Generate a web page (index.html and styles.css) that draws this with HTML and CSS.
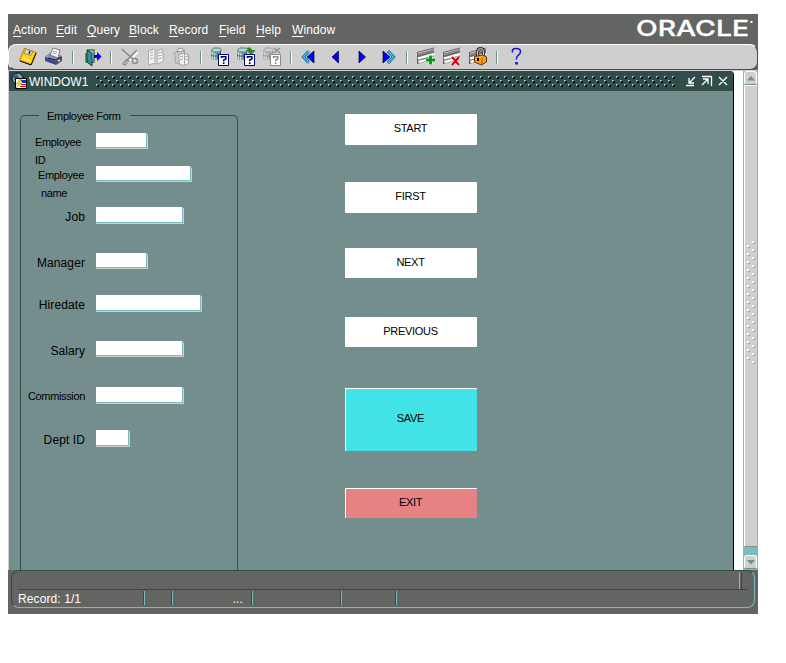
FILE: index.html
```
<!DOCTYPE html>
<html lang="en">
<head>
<meta charset="utf-8">
<title>WINDOW1</title>
<link rel="stylesheet" href="styles.css">
</head>
<body>
<div class="app">
  <header class="menubar">
    <nav class="menus"><span><u>A</u>ction</span><span><u>E</u>dit</span><span><u>Q</u>uery</span><span><u>B</u>lock</span><span><u>R</u>ecord</span><span><u>F</u>ield</span><span><u>H</u>elp</span><span><u>W</u>indow</span></nav>
    <svg class="brand" width="122" height="28"><text x="0" y="20" textLength="113" lengthAdjust="spacingAndGlyphs">ORACLE</text><path d="M115.500 5v2" stroke="#fff" stroke-width="2"/></svg>
  </header>
  <svg width="0" height="0" class="defs">
    <defs>
      <g id="cyl"><path d="M1 3v8l2 2h8V3" fill="#73aaa5"/><path d="M2.500 4v8M4.500 6v7" stroke="#c8e0dc"/><path d="M1.500 3l2-2h6l2 2-2 2h-6z" fill="#b5d6d2" stroke="#527d7b"/><path d="M8 6v6M10.500 4v5" stroke="#315552"/><path d="M1 8l2 1h8" stroke="#426d6b" fill="none"/></g>
      <g id="ask"><path d="M8.500 7.500h10v11h-10z" fill="#fff" stroke="currentColor"/><path d="M11.500 11v-1.300h4.300v2.400l-2.100 1v1.200M13.700 15.300v1.700" stroke="currentColor" stroke-width="1.600" fill="none"/></g>
      <g id="rows"><path d="M1 7L18 2v4L1 11z" fill="#848684"/><path d="M1 5.500L18 1M1 9.500L18 5M1 13.500L18 9M1 16.500L18 12" stroke="#666"/><path d="M2 11.500L18 7M3 15L18 11" stroke="#fff" stroke-width="2"/><path d="M1.500 5v12" stroke="#555" stroke-dasharray="2 1"/></g>
    </defs>
  </svg>
  <div class="toolbar">
    <span class="tool"><svg viewBox="0 0 20 20"><path d="M6.500 1.500l12 4-5 12-12-4z" fill="#ffcf10" stroke="#b58200"/><path d="M2 14l11 4 5-12" fill="none" stroke="#000"/><path d="M8 2l7 2.500-2 4-7-2z" fill="#ded7bd" stroke="#777" stroke-width=".7"/><path d="M12 4l-1 3" stroke="#222" stroke-width="1.500"/><path d="M5 11l7 3" stroke="#ffef7b" stroke-width="2"/></svg></span>
    <span class="tool"><svg viewBox="0 0 20 20"><path d="M1 10l5-4 12 3v5l-6 4-11-4z" fill="#42498c"/><path d="M1 10l5-4 12 3-6 5z" fill="#8c92c6"/><path d="M6 8l3-7 7 2-2 8z" fill="#fff" stroke="#555" stroke-width=".8"/><path d="M9 4l4 1M8.500 6l4 1" stroke="#73aaa5"/><path d="M4 11l8 2 5-3" stroke="#101842" fill="none"/><path d="M14 14l2-1" stroke="#ff0" stroke-width="1.500"/></svg></span>
    <i class="sep"></i>
    <span class="tool"><svg viewBox="0 0 20 20"><path d="M2 2h14v15H2z" fill="#d8d5b6"/><path d="M4 6v9h3M10 15h2V3H5" fill="none" stroke="#426d6b" stroke-width="1.500"/><path d="M5 3l5 3v13l-5-4z" fill="#299292" stroke="#004142"/><path d="M12 8h3V5l4.500 4.500L15 14v-3h-3z" fill="#0000f7"/></svg></span>
    <i class="sep"></i>
    <span class="tool"><svg viewBox="0 0 20 20"><path d="M3 2l11 11M17 4L5 16" stroke="#fff" stroke-width="2" transform="translate(1 1)"/><path d="M2 2l11 10M17 3L5 15" stroke="#8c8e8c" stroke-width="1.700"/><circle cx="15" cy="14" r="2.500" fill="none" stroke="#8c8e8c" stroke-width="1.500"/><path d="M3 17l3-4 3 1-4 4z" fill="none" stroke="#8c8e8c" stroke-width="1.300"/></svg></span>
    <span class="tool"><svg viewBox="0 0 20 20"><path d="M2.500 4l5-1.500 4 1 5-1.500 1 12-6 3-3-1-6 2z" fill="#f3f3f3" stroke="#aaa"/><path d="M9 4v11M11 4v13" stroke="#999"/><path d="M4 6l3-1M4 9l3-1M4 12l3-1M12 6l4-1M12 9l4-1M12 12l4-1" stroke="#aaa"/></svg></span>
    <span class="tool"><svg viewBox="0 0 20 20"><path d="M2.500 5.500l10-2.500v14l-9-1z" fill="#ccc" stroke="#a2a2a2"/><path d="M5 5l1-3 4-1 2 3z" fill="#eee" stroke="#929292"/><path d="M6.500 7.500l5-1 5 1v9l-4 2-5-1z" fill="#f3f3f3" stroke="#a2a2a2"/><path d="M8 10l3-1M8 13l3-1M13 10l3-1M13 13l3-1M12.500 7v11" stroke="#aaa"/></svg></span>
    <i class="sep"></i>
    <span class="tool navy"><svg viewBox="0 0 20 20"><use href="#cyl"/><use href="#ask"/></svg></span>
    <span class="tool navy"><svg viewBox="0 0 20 20"><use href="#cyl"/><use href="#ask"/><path d="M11 1q4-1 5 2.500h3l-4 4-4-4h2q0-1-2-2.500z" fill="#219a10" stroke="#105500" stroke-width=".5"/></svg></span>
    <span class="tool faded"><svg viewBox="0 0 20 20"><use href="#cyl" class="gray"/><use href="#ask"/><path d="M12 1l6 5M18 1l-6 5" stroke="#8c8e8c" stroke-width="1.500"/></svg></span>
    <i class="sep"></i>
    <span class="tool"><svg viewBox="0 0 20 20"><path d="M8.500 4.500L3.500 10l5 5.500" fill="none" stroke="#004263" stroke-width="3"/><path d="M9 4L3.500 10 9 16" fill="none" stroke="#39b2ef" stroke-width="2"/><path d="M14 4v12L7 10z" fill="#0000f7" stroke="#000042" stroke-width=".7"/></svg></span>
    <span class="tool"><svg viewBox="0 0 20 20"><path d="M12.500 4v12L6 10z" fill="#0000f7" stroke="#000042" stroke-width=".7"/></svg></span>
    <span class="tool"><svg viewBox="0 0 20 20"><path d="M7 4v12l6.500-6z" fill="#0000f7" stroke="#000042" stroke-width=".7"/></svg></span>
    <span class="tool"><svg viewBox="0 0 20 20"><path d="M10 4l5.500 6-5.500 6" fill="none" stroke="#004263" stroke-width="3"/><path d="M10 4l5.500 6-5.500 6" fill="none" stroke="#39b2ef" stroke-width="2"/><path d="M5 4v12l7-6z" fill="#0000f7" stroke="#000042" stroke-width=".7"/></svg></span>
    <i class="sep"></i>
    <span class="tool"><svg viewBox="0 0 20 20"><use href="#rows"/><path d="M14.500 8v10M10 13h9" stroke="#fff" stroke-width="4"/><path d="M14.500 8.500v9M10 13h9" stroke="#009a10" stroke-width="2.800"/></svg></span>
    <span class="tool"><svg viewBox="0 0 20 20"><use href="#rows"/><path d="M10 10l7 8M17 10l-7 8" stroke="#fff" stroke-width="3.500"/><path d="M10 10l7 8M17 10l-7 8" stroke="#d60008" stroke-width="2.200"/></svg></span>
    <span class="tool"><svg viewBox="0 0 20 20"><use href="#rows"/><path d="M9.500 9V5q0-3.500 3-3.500t3 3.500v4" fill="none" stroke="#333" stroke-width="3"/><path d="M9.500 9V5q0-3.500 3-3.500t3 3.500v4" fill="none" stroke="#ddd"/><path d="M6.500 9.500l8-1.500 4 2v5l-5 3-7-3z" fill="#f79e21" stroke="#633000"/><path d="M14 11v6" stroke="#a55500"/><path d="M10 11v3" stroke="#000" stroke-width="2"/></svg></span>
    <i class="sep"></i>
    <span class="tool"><svg viewBox="0 0 20 20"><path d="M6.500 5.500q-1-4 3.500-4t4.500 3q0 2.500-2.500 4-2 1.500-1.500 4" fill="none" stroke="#1810ce" stroke-width="1.500"/><path d="M10.500 15v2.500" stroke="#1810ce" stroke-width="2.600"/></svg></span>
  </div>
  <main class="desktop">
    <section class="window">
      <div class="titlebar">
        <svg class="appicon" width="16" height="18"><circle cx="6.500" cy="6.500" r="5.500" fill="#8c9adb" stroke="#000"/><path d="M2 4l4-2 2 4-4 3z" fill="#29696b"/><path d="M4.500 6.500h11v10h-11z" fill="#fff" stroke="#000"/><path d="M9 7l-4 5h3l-3 4 6-5H8l3-4z" fill="#ffdf00" stroke="#a58200" stroke-width=".4"/><path d="M10 8h5v3h-4z" fill="#0030d6"/><path d="M10 12.500h5M9 14.500h6" stroke="#e70000"/></svg>
        <span>WINDOW1</span>
        <svg class="grip" width="580" height="11"><defs><pattern id="dots" width="8" height="8" patternUnits="userSpaceOnUse"><path d="M1 1h2v2H1zM5 5h2v2H5z" fill="#000"/><path d="M0 0h2v1H1v1H0zM4 4h2v1H5v1H4z" fill="#84c7c6"/></pattern></defs><rect width="580" height="11" fill="url(#dots)"/></svg>
        <svg class="controls" width="46" height="12" fill="none" stroke="#fff" stroke-width="1.300"><path d="M1 10.500h8M10 2L4 8M4 3v5h5M17 1.500h9.500V11M17 10l6-6M18 4h5v5M34 2l8 8M42 2l-8 8"/></svg>
      </div>
      <div class="content">
        <fieldset class="form">
          <legend>Employee Form</legend>
          <label class="small id">Employee<br>ID</label><input class="w53 h16">
          <label class="small name">Employee<br><em>name</em></label><input class="w97 h16">
          <label>Job</label><input class="w89 h17">
          <label>Manager</label><input class="w53 h16">
          <label>Hiredate</label><input class="w107 h17">
          <label>Salary</label><input class="w89 h16">
          <label class="small">Commission</label><input class="w89 h17">
          <label>Dept ID</label><input class="w35 h17">
        </fieldset>
        <div class="actions">
          <button>START</button>
          <button>FIRST</button>
          <button>NEXT</button>
          <button>PREVIOUS</button>
          <button class="save">SAVE</button>
          <button class="exit">EXIT</button>
        </div>
      </div>
    </section>
    <div class="scrollbar">
      <div class="arrow"><svg width="8" height="5"><path d="M0 4.500L4 0l4 4.500z" fill="#738e8c"/></svg></div>
      <div class="thumb"><svg width="9" height="124"><defs><pattern id="knobs" width="9" height="8" patternUnits="userSpaceOnUse"><path d="M6 2h2v2H6zM1 6h2v2H1z" fill="#84b6ba"/><path d="M5 1h2v2H5zM0 5h2v2H0z" fill="#fff"/></pattern></defs><rect width="9" height="124" fill="url(#knobs)"/></svg></div>
      <div class="arrow"><svg width="8" height="5"><path d="M0 0h8L4 4.500z" fill="#738e8c"/></svg></div>
    </div>
  </main>
  <footer class="status">
    <div class="panel">
      <div class="message"><i></i></div>
      <div class="cells"><span>Record: 1/1</span><span></span><span class="dots">...</span><span></span><span></span></div>
    </div>
  </footer>
</div>
</body>
</html>
```
FILE: styles.css
```
* { box-sizing: border-box; }
body { margin: 0; background: #fff; font: 12px/18px "Liberation Sans", Arial, sans-serif; color: #000; }
.app { width: 750px; height: 600px; margin: 14px 0 0 8px; background: #636562; display: flex; flex-direction: column; }
.defs { position: absolute; }
.menubar { height: 30px; flex: none; display: flex; justify-content: space-between; padding: 2px 0 0 5px; color: #fff; }
.menus { display: grid; grid-template-columns: 43px 31px 42px 40px 50px 37px 36px 45px; line-height: 28px; letter-spacing: .1px; }
.menus u { text-underline-offset: 2px; }
.brand { overflow: visible; }
.brand text { font: 500 21px Inter, sans-serif; fill: #fff; stroke: #fff; stroke-width: .3px; }
.toolbar { height: 26px; flex: none; display: flex; align-items: center; padding-left: 6px; background: #cecfce; border: 1px solid #fff; border-right-color: #315552; border-bottom-color: #315552; border-radius: 8px; }
.tool { width: 26px; height: 20px; display: flex; justify-content: center; flex: none; }
.tool svg { width: 20px; height: 20px; }
.navy { color: #00007b; }
.faded { color: #8c8e8c; }
.gray { filter: grayscale(1); opacity: .5; }
.sep { width: 2px; height: 13px; margin: 0 5px; border-left: 1px solid #738e8c; border-right: 1px solid #fff; flex: none; }
.desktop { height: 500px; flex: none; display: flex; background: #fff; border-top: 1px solid #cecfce; }
.window { width: 726px; border-left: 1px solid #cecfce; border-right: 1px solid #000; background: #738e8c; display: flex; flex-direction: column; border-top-right-radius: 4px; overflow: hidden; }
.titlebar { height: 20px; flex: none; display: flex; align-items: center; padding-left: 2px; background: #314d4a; color: #fff; }
.titlebar span { width: 67px; padding: 1px 0 0 2px; }
.grip { margin-left: 2px; }
.controls { margin-left: 9px; }
.content { display: flex; flex: 1; min-height: 0; }
.form { width: 218px; height: 464px; margin: 15px 0 0 11px; padding: 9px 0 0 5px; border: 1px solid #314d4a; border-bottom: 0; border-radius: 5px 5px 0 0; display: grid; grid-template-columns: 59px 1fr; grid-template-rows: 33px 41px 46px 42px 46px 46px 43px 30px; column-gap: 10px; }
.form legend { width: 91px; margin-left: 13px; padding: 2px 0 0 8px; font-size: 11px; line-height: 16px; letter-spacing: -.3px; }
.form label { text-align: right; margin-top: 1px; letter-spacing: .1px; white-space: nowrap; }
.form .small { font-size: 11px; margin-top: 0; letter-spacing: -.35px; }
.form .id { text-align: left; padding-left: 9px; }
.form .name { text-align: left; padding-left: 12px; }
.form em { font-style: normal; padding-left: 3px; }
.form input { display: block; margin: 0; padding: 0; background: #fff; border: 1px solid #7bbabd; border-width: 0 1px 1px; border-left-color: #738e8c; border-radius: 1px; box-shadow: 1px 1px 0 #cecfce; outline: 0; }
.h16 { height: 15px; }
.h17 { height: 16px; }
.w35 { width: 34px; }
.w53 { width: 52px; }
.w89 { width: 88px; }
.w97 { width: 96px; }
.w107 { width: 106px; }
.actions { width: 132px; margin: 23px 0 0 107px; display: flex; flex-direction: column; }
.actions button { height: 31px; flex: none; margin: 0 0 37px; border: 1px solid #fff; border-right: 0; border-bottom: 0; border-radius: 1px; background: #fff; padding: 0 2px 4px 0; font: 11px "Liberation Sans", Arial, sans-serif; letter-spacing: -.3px; color: #000; }
.actions button:nth-child(2) { margin-bottom: 35px; }
.actions button:nth-child(3) { height: 30px; margin-bottom: 39px; }
.actions button:nth-child(4) { height: 30px; margin-bottom: 41px; }
.actions .save { height: 63px; background: #42e3e7; padding-bottom: 5px; }
.actions .exit { height: 30px; background: #e78284; }
.scrollbar { width: 15px; margin-left: 9px; background: #7bbabd; padding: 0 1px; display: flex; flex-direction: column; }
.arrow { height: 14px; display: flex; align-items: center; justify-content: center; background: #cecfce; border: 1px solid #fff; border-bottom-color: #738e8c; border-radius: 3px; }
.thumb { height: 462px; margin-bottom: 8px; background: #cecfce; border: 1px solid #fff; border-right: 0; border-bottom-color: #738e8c; display: flex; justify-content: center; align-items: flex-start; padding-top: 154px; }
.status { flex: 1; padding: 0 3px 6px; }
.panel { height: 38px; border: 1px solid #314d4a; border-right-color: #7bbabd; border-bottom-color: #7bbabd; border-radius: 8px; }
.message { height: 19px; margin: 0 6px; border-bottom: 1px solid #314d4a; display: flex; justify-content: flex-end; }
.message i { width: 3px; height: 17px; margin: 1px 6px 0 0; border-left: 1px solid #7bbabd; border-right: 1px solid #314d4a; }
.cells { display: grid; grid-template-columns: 127px 28px 80px 89px 55px; padding: 1px 0 0 6px; color: #fff; line-height: 16px; }
.cells span { height: 14px; border-right: 1px solid #7bbabd; box-shadow: inset -1px 0 #314d4a; letter-spacing: .1px; }
.cells .dots { text-align: right; padding-right: 9px; }
```
